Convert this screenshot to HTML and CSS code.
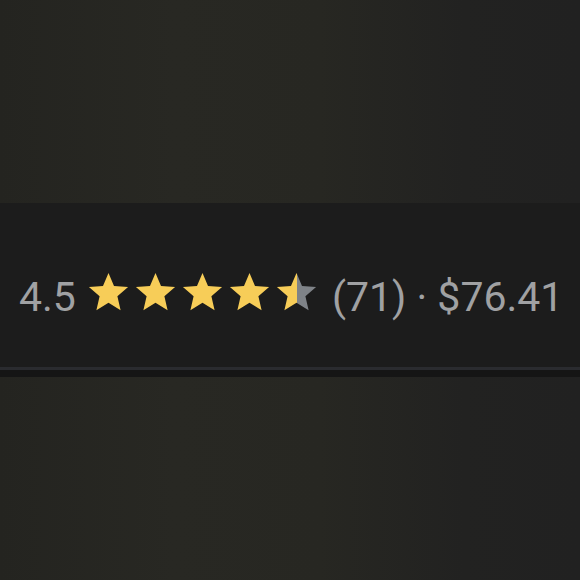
FILE: index.html
```html
<!DOCTYPE html>
<html lang="en">
<head>
    <meta charset="UTF-8">
    <meta name="viewport" content="width=device-width, initial-scale=1.0">
    <title>Rating</title>
    <link rel="stylesheet" href="styles.css">
</head>
<body>
    <div class="spacer"></div>

    <div class="rating-bar">
        <div class="rating-row">
            <span class="score">4.5</span>
            <div class="stars">
                <svg class="star" viewBox="0 0 24 24"><path class="full" d="M12 17.27L18.18 21l-1.64-7.03L22 9.24l-7.19-.61L12 2 9.19 8.63 2 9.24l5.46 4.73L5.82 21z"/></svg>
                <svg class="star" viewBox="0 0 24 24"><path class="full" d="M12 17.27L18.18 21l-1.64-7.03L22 9.24l-7.19-.61L12 2 9.19 8.63 2 9.24l5.46 4.73L5.82 21z"/></svg>
                <svg class="star" viewBox="0 0 24 24"><path class="full" d="M12 17.27L18.18 21l-1.64-7.03L22 9.24l-7.19-.61L12 2 9.19 8.63 2 9.24l5.46 4.73L5.82 21z"/></svg>
                <svg class="star" viewBox="0 0 24 24"><path class="full" d="M12 17.27L18.18 21l-1.64-7.03L22 9.24l-7.19-.61L12 2 9.19 8.63 2 9.24l5.46 4.73L5.82 21z"/></svg>
                <svg class="star" viewBox="0 0 24 24">
                    <defs>
                        <linearGradient id="half" x1="0" x2="1" y1="0" y2="0">
                            <stop offset="50%" stop-color="#f7cd58"/>
                            <stop offset="50%" stop-color="#7f8388"/>
                        </linearGradient>
                    </defs>
                    <path fill="url(#half)" d="M12 17.27L18.18 21l-1.64-7.03L22 9.24l-7.19-.61L12 2 9.19 8.63 2 9.24l5.46 4.73L5.82 21z"/>
                </svg>
            </div>
            <span class="meta">(71) · $76.41</span>
        </div>
    </div>
    <div class="divider"></div>
    <div class="shadow"></div>
</body>
</html>
```

FILE: styles.css
```css
html, body {
    height: 100%;
}
body {
    margin: 0;
    font-family: Roboto, 'Liberation Sans', Arial, sans-serif;
    background: linear-gradient(to right, #242420 0%, #282823 30%, #272722 55%, #222221 80%, #212121 100%);
    display: flex;
    flex-direction: column;
}
.spacer {
    height: 203px;
}
.rating-bar {
    height: 164px;
    box-sizing: border-box;
    padding: 14px 0 0 19px;
    background-color: #1c1c1c;
    display: flex;
    align-items: center;
}
.rating-row {
    display: flex;
    align-items: center;
}
.score,
.meta {
    font-size: 41px;
    line-height: 48px;
    padding-top: 10px;
    color: #a0a1a3;
    white-space: pre;
}
.stars {
    display: flex;
    margin: 0 12px 0 9px;
}
.star {
    width: 47px;
    height: 47px;
    display: block;
}
.star .full {
    fill: #f7cd58;
}
.divider {
    height: 3px;
    background-color: #2a2b2f;
}
.shadow {
    height: 7px;
    background-color: #151515;
}
```
